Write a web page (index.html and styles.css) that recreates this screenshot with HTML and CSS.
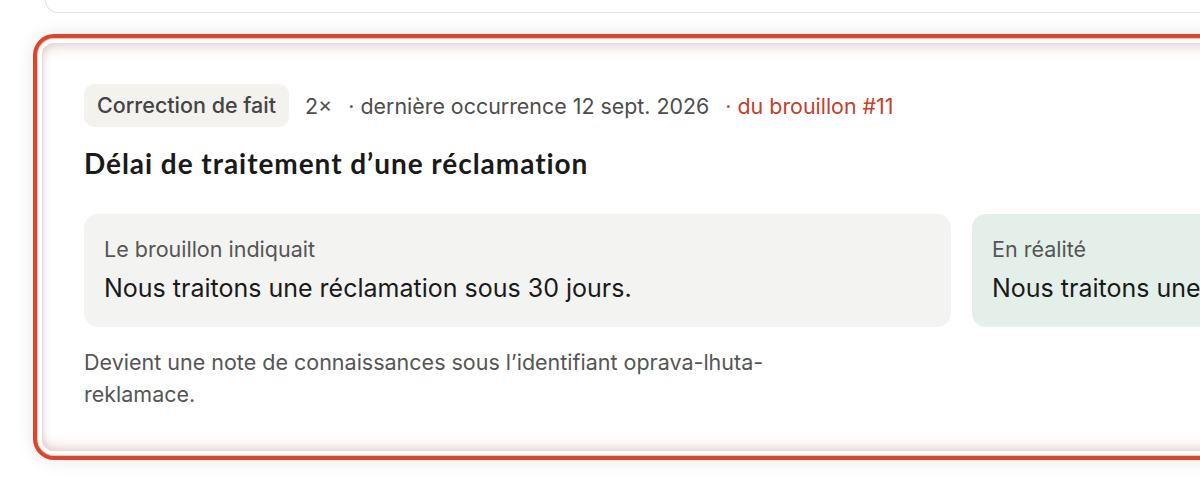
FILE: index.html
```html
<!DOCTYPE html>
<html lang="fr">
<head>
<meta charset="utf-8">
<link rel="stylesheet" href="styles.css">
</head>
<body>
<div class="list">
  <div class="prev"></div>
  <article class="card">
    <div class="meta">
      <span class="chip">Correction de fait</span>
      <span class="count">2×</span>
      <span class="last">· dernière occurrence 12 sept. 2026</span>
      <span class="src">· du brouillon #11</span>
    </div>
    <h2 class="title">Délai de traitement d’une réclamation</h2>
    <div class="compare">
      <div class="box box-before">
        <div class="label">Le brouillon indiquait</div>
        <div class="value">Nous traitons une réclamation sous 30 jours.</div>
      </div>
      <div class="box box-after">
        <div class="label">En réalité</div>
        <div class="value">Nous traitons une réclamation sous 14 jours.</div>
      </div>
    </div>
    <p class="note">Devient une note de connaissances sous l’identifiant oprava-lhuta-reklamace.</p>
  </article>
</div>
</body>
</html>
```

FILE: styles.css
```css
html, body {
  margin: 0;
  padding: 0;
  background: #ffffff;
  overflow: hidden;
}
body {
  width: 1200px;
  height: 491px;
  font-family: Inter, "Noto Sans", sans-serif;
  color: #1c1c1c;
}
.list {
  padding-left: 45px;
  display: flex;
  flex-direction: column;
  gap: 30px;
  width: 1900px;
}
.prev {
  height: 12px;
  border: 1px solid #e2e2e0;
  border-top: 0;
  border-radius: 0 0 14px 14px;
  background: #fff;
}
.card {
  margin-left: -3px;
  width: 1839px;
  box-sizing: border-box;
  padding: 41px 42px 41px;
  border-radius: 12px;
  background: #fff;
  box-shadow:
    inset 0 0 0 1px #ead9d6,
    inset 0 12px 14px -10px rgba(175, 120, 112, 0.40),
    inset 0 -12px 14px -10px rgba(175, 120, 112, 0.40),
    inset 8px 0 10px -8px rgba(175, 120, 112, 0.30),
    0 0 0 4px #ffffff,
    0 0 0 5px #f6c3b7,
    0 0 0 9px #d9472c,
    0 0 18px 9px rgba(0, 0, 0, 0.10);
}
.meta {
  display: flex;
  align-items: center;
  gap: 16px;
  font-size: 21.4px;
  color: #4d4d4d;
}
.chip {
  background: #f3f2ef;
  border-radius: 10px;
  padding: 8px 13px 9px;
  font-size: 21.5px;
  font-weight: 500;
  line-height: 26px;
  color: #444;
}
.count { margin-right: 0; }
.src { color: #c4402b; }
.title {
  margin: 18px 0 0;
  font-family: Lato, "Open Sans", sans-serif;
  font-weight: 700;
  font-size: 28px;
  letter-spacing: 0.95px;
  line-height: 36px;
  color: #1a1a1a;
}
.compare {
  margin-top: 33px;
  display: grid;
  grid-template-columns: 1fr 1fr;
  gap: 21px;
}
.box {
  border-radius: 14px;
  padding: 20px 20px 22px;
}
.box-before { background: #f3f3f1; }
.box-after { background: #e5efe9; }
.label {
  font-size: 21.5px;
  line-height: 30px;
  color: #555;
  margin-bottom: 7px;
}
.value {
  font-size: 25px;
  line-height: 34px;
  color: #1a1a1a;
}
.note {
  margin: 19px 0 0;
  max-width: 700px;
  font-size: 21.5px;
  line-height: 32px;
  color: #555;
}
```
